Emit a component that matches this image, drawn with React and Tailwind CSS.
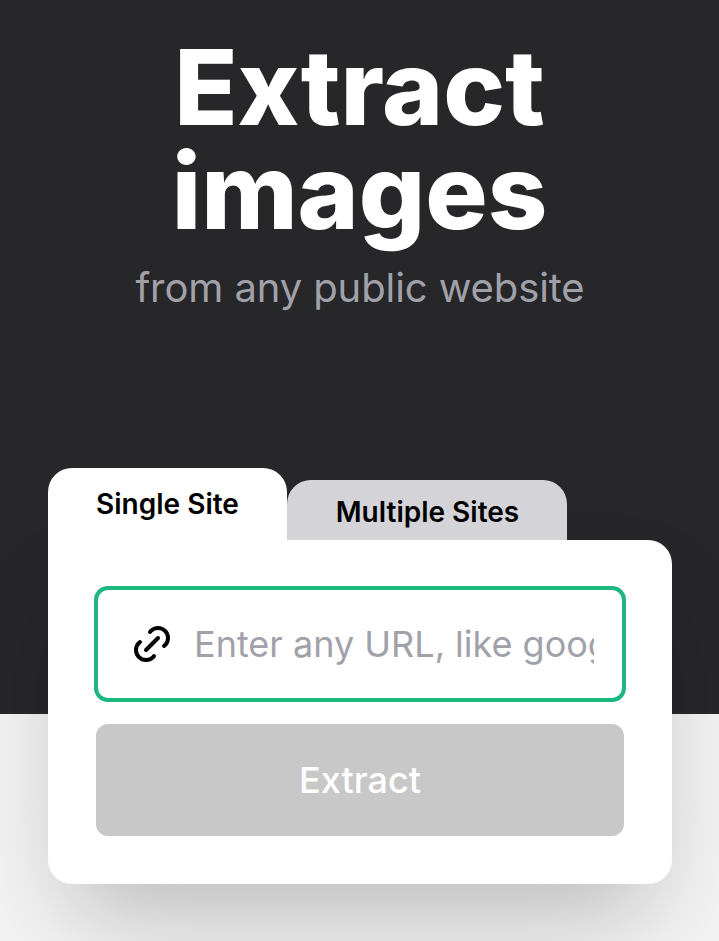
export default function App() {
  return (
    <main className="h-[941px] w-[719px] overflow-hidden bg-[#f3f3f3] font-['Inter',sans-serif]">
      <div className="flex h-[714px] flex-col bg-[#27272a] pt-[35px]">
        <h1 className="text-center text-[104px] leading-[104px] font-extrabold text-white">
          Extract
          <br />
          images
        </h1>
        <p className="mt-[21px] pl-px text-center text-[40px] leading-[48px] tracking-[-0.1px] text-[#a1a1aa]">from any public website</p>
        <section className="mx-12 mt-[156px]">
          <div className="relative z-10 flex items-end text-[28px] font-semibold text-black">
            <button className="h-[72px] w-[239px] rounded-t-3xl bg-white">Single Site</button>
            <button className="h-[60px] w-[280px] rounded-t-3xl bg-[#d4d4d8] pt-1 pl-px">Multiple Sites</button>
          </div>
          <div className="relative h-[344px] w-[624px] rounded-3xl rounded-tl-none bg-white px-[46px] pt-[46px] shadow-[0_50px_100px_-24px_rgba(0,0,0,0.25)]">
            <label className="flex h-[116px] w-[532px] items-center rounded-[14px] border-4 border-[#1db880] pl-[30px]">
              <svg className="size-12 shrink-0" viewBox="0 0 24 24" fill="none" stroke="black" strokeWidth="2" strokeLinecap="round" strokeLinejoin="round">
                <path d="M9 15l6-6M11 6l.463-.536a5 5 0 0 1 7.071 7.072L18 13M13 18l-.397.534a5.068 5.068 0 0 1-7.127 0a4.972 4.972 0 0 1 0-7.071L6 11" />
              </svg>
              <input className="ml-[18px] w-[400px] text-[36px] outline-none placeholder:text-[#a1a1aa]" placeholder="Enter any URL, like google.com" />
            </label>
            <button className="mt-[22px] ml-[2px] block h-[112px] w-[528px] rounded-xl bg-[#c8c8c8] text-[36px] font-medium text-white">Extract</button>
          </div>
        </section>
      </div>
    </main>
  );
}
